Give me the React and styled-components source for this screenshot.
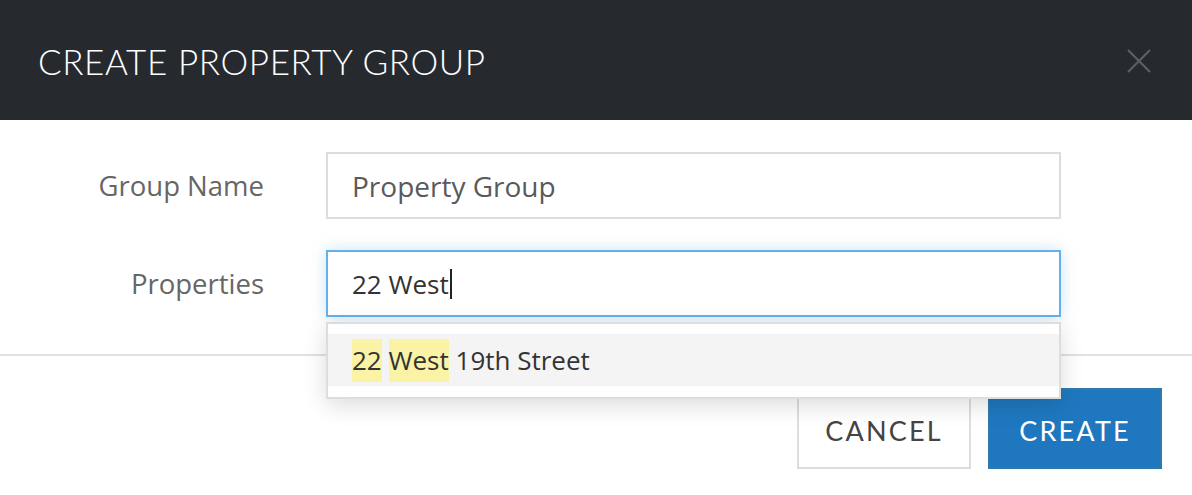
import styled, { createGlobalStyle } from "styled-components";

const GlobalStyle = createGlobalStyle`
  html, body {
    margin: 0;
    padding: 0;
    background: #fff;
  }
  body {
    font-family: "Open Sans", "Liberation Sans", sans-serif;
  }
`;

const Modal = styled.div`
  width: 1192px;
  height: 495px;
  overflow: hidden;
  background: #fff;
`;

const Header = styled.div`
  height: 120px;
  background: #262a2f;
  display: flex;
  align-items: center;
  justify-content: space-between;
  padding: 0 41px 0 38px;
  box-sizing: border-box;
`;

const Title = styled.h1`
  margin: 0;
  font-family: "Lato", sans-serif;
  font-weight: 300;
  font-size: 35px;
  letter-spacing: 0.6px;
  color: #fff;
  padding-top: 2px;
`;

const CloseButton = styled.button`
  background: none;
  border: 0;
  padding: 0;
  width: 24px;
  height: 24px;
  display: flex;
  cursor: pointer;
  margin-top: 1px;
`;

const Form = styled.div`
  display: grid;
  grid-template-columns: 226px 735px;
  column-gap: 62px;
  row-gap: 31px;
  padding: 32px 0 37px 38px;
  border-bottom: 2px solid #e0e0e0;
  align-items: center;
`;

const Label = styled.label`
  text-align: right;
  font-size: 27.5px;
  color: #666;
`;

const Field = styled.div`
  position: relative;
`;

const Input = styled.div`
  height: 67px;
  box-sizing: border-box;
  border: 2px solid ${(p) => (p.$focused ? "#66b0e8" : "#dddddd")};
  box-shadow: ${(p) => (p.$focused ? "0 0 14px rgba(102, 176, 232, 0.35)" : "none")};
  padding: 0 24px;
  display: flex;
  align-items: center;
  font-size: ${(p) => p.$size || 26}px;
  color: ${(p) => (p.$focused ? "#333" : "#5a5a5a")};
`;

const Caret = styled.span`
  display: inline-block;
  width: 2px;
  height: 30px;
  background: #222;
  margin-left: 1px;
`;

const Dropdown = styled.ul`
  position: absolute;
  top: 72px;
  left: 0;
  right: 0;
  margin: 0;
  padding: 10px 0 11px;
  list-style: none;
  background: #fff;
  border: 2px solid #dddddd;
  box-shadow: 0 6px 22px rgba(0, 0, 0, 0.14);
  z-index: 2;
`;

const Option = styled.li`
  height: 52px;
  line-height: 52px;
  padding: 0 24px;
  font-size: 26px;
  color: #333;
  background: ${(p) => (p.$active ? "#f4f4f4" : "#fff")};
  white-space: pre;
`;

const Mark = styled.mark`
  background: #faf3a6;
  color: inherit;
  padding: 3px 0 4px;
`;

const Footer = styled.div`
  display: flex;
  justify-content: flex-end;
  gap: 17px;
  padding: 32px 30px 0;
`;

const Button = styled.button`
  width: 174px;
  height: 81px;
  box-sizing: border-box;
  padding: 4px 0 0;
  font-family: "Lato", sans-serif;
  font-weight: 400;
  font-size: 27px;
  letter-spacing: 2.2px;
  cursor: pointer;
  border: 2px solid ${(p) => (p.$primary ? "#2f7aab" : "#dddddd")};
  background: ${(p) => (p.$primary ? "#1f78bf" : "#fff")};
  color: ${(p) => (p.$primary ? "#fff" : "#444")};
`;

const CloseIcon = () => (
  <svg width="24" height="24" viewBox="0 0 24 24">
    <path d="M1 1 L23 23 M23 1 L1 23" stroke="#5d6166" strokeWidth="2" fill="none" />
  </svg>
);

export default function App() {
  return (
    <>
      <GlobalStyle />
      <Modal>
        <Header>
          <Title>CREATE PROPERTY GROUP</Title>
          <CloseButton aria-label="Close">
            <CloseIcon />
          </CloseButton>
        </Header>
        <Form>
          <Label>Group Name</Label>
          <Input $size={28}>Property Group</Input>
          <Label>Properties</Label>
          <Field>
            <Input $focused>
              22 West<Caret />
            </Input>
            <Dropdown>
              <Option $active>
                <Mark>22</Mark> <Mark>West</Mark> 19th Street
              </Option>
            </Dropdown>
          </Field>
        </Form>
        <Footer>
          <Button>CANCEL</Button>
          <Button $primary>CREATE</Button>
        </Footer>
      </Modal>
    </>
  );
}
